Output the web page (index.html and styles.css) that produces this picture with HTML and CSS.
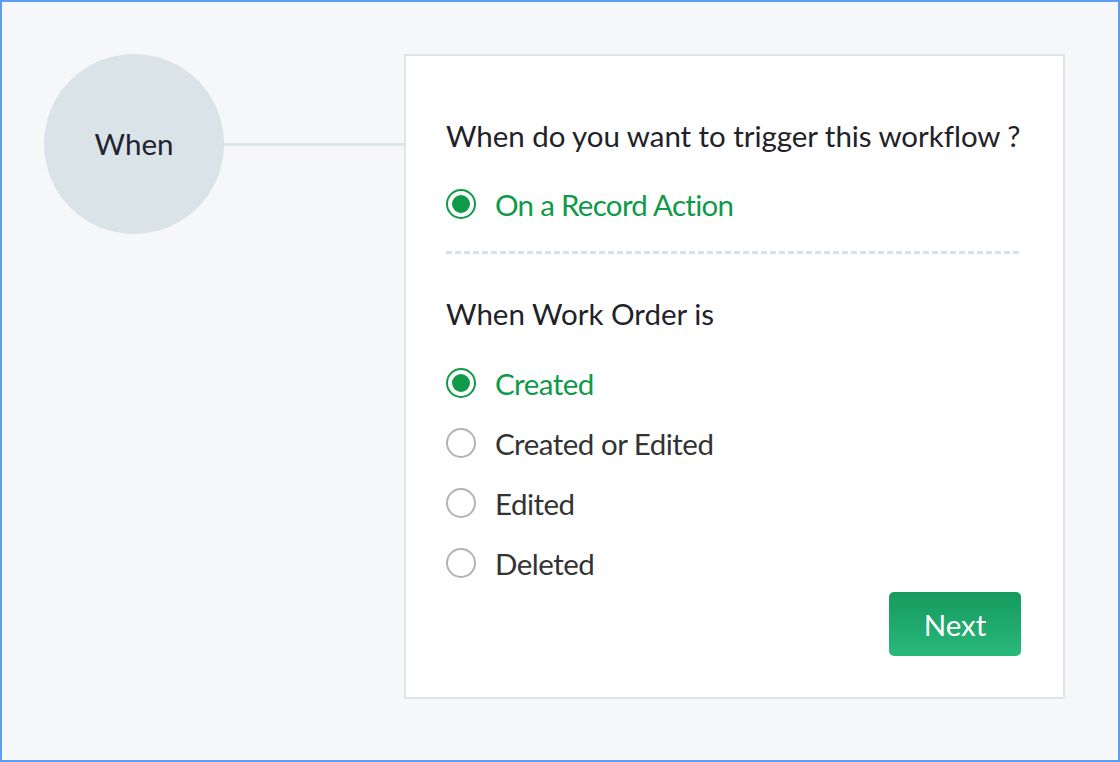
FILE: index.html
```html
<!DOCTYPE html>
<html>
<head>
<meta charset="utf-8">
<link rel="stylesheet" href="styles.css">
</head>
<body>
<div class="frame">
  <div class="node">When</div>
  <div class="connector"></div>
  <div class="card">
    <div class="title">When do you want to trigger this workflow ?</div>
    <label class="option checked first"><span class="radio"></span><span class="label">On a Record Action</span></label>
    <div class="divider"></div>
    <div class="subtitle">When Work Order is</div>
    <div class="options">
      <label class="option checked"><span class="radio"></span><span class="label">Created</span></label>
      <label class="option"><span class="radio"></span><span class="label">Created or Edited</span></label>
      <label class="option"><span class="radio"></span><span class="label">Edited</span></label>
      <label class="option"><span class="radio"></span><span class="label">Deleted</span></label>
    </div>
    <div class="actions"><button class="next">Next</button></div>
  </div>
</div>
</body>
</html>
```
FILE: styles.css
```css
* { box-sizing: border-box; }
html, body { margin: 0; padding: 0; }
body { font-family: Lato, "Open Sans", sans-serif; }
.frame {
  width: 1120px;
  height: 762px;
  border: 2px solid #5e9df5;
  background: #f5f7f9;
  display: flex;
  align-items: flex-start;
  padding: 52px 0 0 42px;
}
.node {
  width: 180px;
  height: 180px;
  border-radius: 50%;
  background: #dae3e8;
  display: flex;
  align-items: center;
  justify-content: center;
  font-size: 29.5px;
  color: #1f2430;
  padding-bottom: 2px;
  flex: none;
}
.connector {
  width: 180px;
  height: 3px;
  background: #dce5ea;
  margin-top: 89px;
  flex: none;
}
.card {
  width: 661px;
  height: 645px;
  background: #fff;
  border: 2px solid #dde5eb;
  padding: 62px 41px 0 40px;
  display: flex;
  flex-direction: column;
  flex: none;
}
.title {
  font-size: 29.5px;
  line-height: 36px;
  color: #1f2228;
  white-space: nowrap;
  letter-spacing: -0.05px;
}
.option {
  display: flex;
  align-items: center;
  height: 60px;
  font-size: 29.5px;
  letter-spacing: -0.5px;
  color: #333;
}
.option.first { margin-top: 20px; letter-spacing: -0.7px; }
.option.checked { color: #0e9a49; }
.radio {
  width: 30px;
  height: 30px;
  border-radius: 50%;
  border: 2px solid #b3b3b3;
  margin-right: 19px;
  flex: none;
  position: relative;
}
.option.checked .radio {
  border-color: #0e9a49;
}
.option.checked .radio::after {
  content: "";
  position: absolute;
  left: 4px;
  top: 4px;
  width: 18px;
  height: 18px;
  border-radius: 50%;
  background: #0e9a49;
}
.divider {
  margin-top: 17px;
  height: 3px;
  background: repeating-linear-gradient(90deg, #d9e1e8 0 6px, transparent 6px 9px);
}
.subtitle {
  margin-top: 42px;
  font-size: 29.5px;
  line-height: 36px;
  color: #1f2228;
}
.options { margin-top: 21px; }
.actions {
  display: flex;
  justify-content: flex-end;
  margin-top: -1px;
}
.next {
  width: 132px;
  height: 64px;
  border: none;
  border-radius: 5px;
  background: linear-gradient(180deg, #159a5e, #28b97a);
  color: #fff;
  font-family: Lato, sans-serif;
  font-size: 29.5px;
  margin-right: 1px;
}
```
